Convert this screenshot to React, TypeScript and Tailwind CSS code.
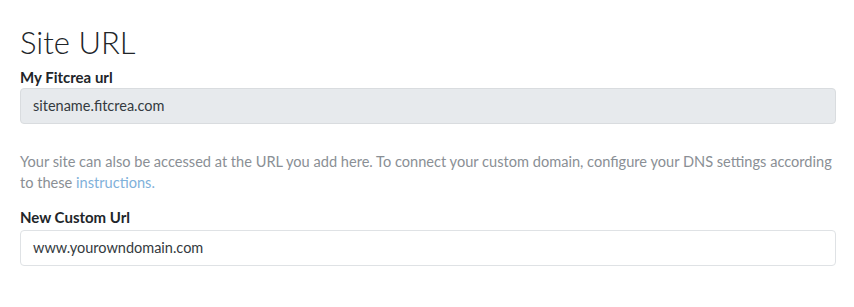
export default function App() {
  return (
    <div className="w-[854px] h-[307px] bg-white pl-5 pr-[18px] pt-[23px] text-[#212529]" style={{ fontFamily: "Lato, 'Noto Sans', sans-serif" }}>
      <h1 className="text-[31px] font-light leading-[38px] text-[#212529]">Site URL</h1>
      <label className="block mt-[5px] text-[15px] font-bold leading-[22px]">My Fitcrea url</label>
      <div className="mt-0 h-[36px] rounded border border-[#d9dcdf] bg-[#e7eaed] px-3 flex items-center text-[14.5px] text-[#343a40]">
        sitename.fitcrea.com
      </div>
      <p className="mt-[27px] text-[14.6px] leading-[21px] text-[#8a8f95]">
        Your site can also be accessed at the URL you add here. To connect your custom domain, configure your DNS settings according to these{" "}
        <a className="text-[#7fb1da]">instructions.</a>
      </p>
      <label className="block mt-[13px] text-[15px] font-bold leading-[22px]">New Custom Url</label>
      <div className="mt-[2px] h-[36px] rounded border border-[#dfe2e5] bg-white px-3 flex items-center text-[14.5px] text-[#343a40]">
        www.yourowndomain.com
      </div>
    </div>
  );
}
